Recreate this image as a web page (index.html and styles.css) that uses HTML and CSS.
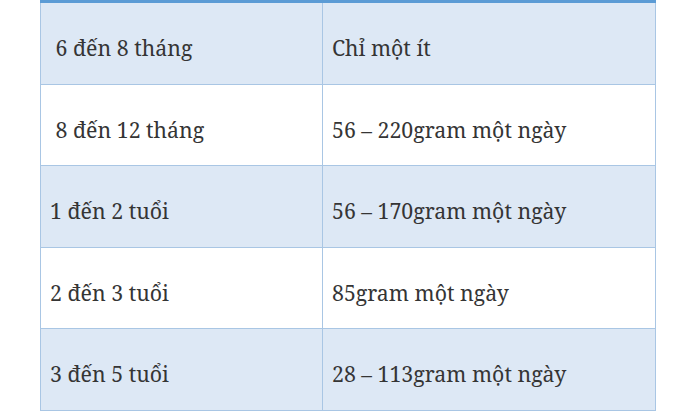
FILE: index.html
```html
<!DOCTYPE html>
<html lang="vi">
<head>
<meta charset="utf-8">
<link rel="stylesheet" href="styles.css">
</head>
<body>
<table class="diet">
  <tbody>
    <tr class="odd first"><td class="age">&nbsp;6 đến 8 tháng</td><td class="amount">Chỉ một ít</td></tr>
    <tr class="even"><td class="age">&nbsp;8 đến 12 tháng</td><td class="amount">56 – 220gram một ngày</td></tr>
    <tr class="odd"><td class="age">1 đến 2 tuổi</td><td class="amount">56 – 170gram một ngày</td></tr>
    <tr class="even"><td class="age">2 đến 3 tuổi</td><td class="amount">85gram một ngày</td></tr>
    <tr class="odd"><td class="age">3 đến 5 tuổi</td><td class="amount">28 – 113gram một ngày</td></tr>
  </tbody>
</table>
</body>
</html>
```

FILE: styles.css
```css
html, body {
  margin: 0;
  padding: 0;
  background: #ffffff;
}

.diet {
  margin-left: 40px;
  width: 616px;
  border-collapse: collapse;
  border-top: 3px solid #5b9bd5;
  font-family: "Noto Serif", "DejaVu Serif", "Liberation Serif", serif;
  font-size: 21.3px;
  color: #353535;
  table-layout: fixed;
}

.diet td {
  border: 1px solid #a9c6e4;
  height: 81.5px;
  padding: 9px 9px 0 9px;
  box-sizing: border-box;
  vertical-align: middle;
  white-space: nowrap;
}

.diet tr.first td {
  height: 82.5px;
}

.diet td.age {
  width: 282px;
}

.diet tr.odd td {
  background: #dde8f5;
}

.diet tr.even td {
  background: #ffffff;
}
```
